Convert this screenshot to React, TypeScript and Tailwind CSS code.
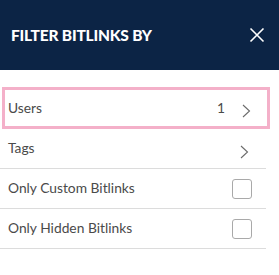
import React from "react";

function Chevron() {
  return (
    <svg width="9" height="14" viewBox="0 0 9 14" fill="none" className="mt-[6px]">
      <path d="M1 1l6.5 6L1 13" stroke="#6b6b6b" strokeWidth="1.1" />
    </svg>
  );
}

function Box() {
  return <div className="w-[20px] h-[20px] rounded-[3px] border border-[#a9a9a9] bg-white" />;
}

export default function App() {
  return (
    <div className="w-[279px] h-[275px] bg-white" style={{ fontFamily: "Lato, 'Open Sans', sans-serif" }}>
      {/* header */}
      <div className="h-[70px] bg-[#0c2445] flex items-center justify-between pl-[11px] pr-[14px]">
        <span className="text-white text-[15.5px] font-black tracking-[-0.2px] mt-[1px]">FILTER BITLINKS BY</span>
        <svg width="16" height="16" viewBox="0 0 16 16" fill="none">
          <path d="M1.5 1.5l13 13M14.5 1.5l-13 13" stroke="#ffffff" strokeWidth="1.6" />
        </svg>
      </div>

      <div className="pt-[17px] w-[270px] text-[13.8px] text-[#4a4a4a]">
        <div className="h-[42px] ml-[2px] border-[3px] border-[#f4b0c9] flex items-center pl-[3px] pr-[16px]">
          <span className="flex-1">Users</span>
          <span className="mr-[17px]">1</span>
          <Chevron />
        </div>
        <div className="h-[40px] border-b border-[#dcdcdc] flex items-center pl-[8px] pr-[17px] mr-[4px]">
          <span className="flex-1">Tags</span>
          <Chevron />
        </div>
        <div className="h-[40px] border-b border-[#dcdcdc] flex items-center pl-[8px] pr-[14px] mr-[4px]">
          <span className="flex-1">Only Custom Bitlinks</span>
          <Box />
        </div>
        <div className="h-[40px] border-b border-[#dcdcdc] flex items-center pl-[8px] pr-[14px] mr-[4px]">
          <span className="flex-1">Only Hidden Bitlinks</span>
          <Box />
        </div>
      </div>
    </div>
  );
}
